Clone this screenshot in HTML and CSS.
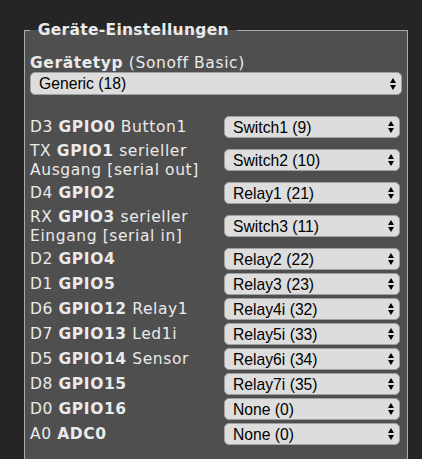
FILE: index.html
```html
<!DOCTYPE html>
<html lang="de">
<head>
  <meta charset="UTF-8" />
  <meta name="viewport" content="width=device-width, initial-scale=1.0" />
  <title>Geräte-Einstellungen</title>
  <link rel="stylesheet" href="styles.css">
</head>
<body>
  <div class="page">
    <fieldset class="settings">
      <legend>&nbsp;Geräte-Einstellungen&nbsp;</legend>

      <!-- Device type -->
      <div class="devtype"><b>Gerätetyp</b> (Sonoff Basic)</div>
      <div class="sel wide">
        <select><option>Generic (18)</option></select>
      </div>

      <!-- GPIO table -->
      <div class="gpio">
        <div class="pin">D3 <b>GPIO0</b> Button1</div>
        <div class="sel"><select><option>Switch1 (9)</option></select></div>

        <div class="pin">TX <b>GPIO1</b> serieller Ausgang [serial out]</div>
        <div class="sel"><select><option>Switch2 (10)</option></select></div>

        <div class="pin">D4 <b>GPIO2</b></div>
        <div class="sel"><select><option>Relay1 (21)</option></select></div>

        <div class="pin">RX <b>GPIO3</b> serieller Eingang [serial in]</div>
        <div class="sel"><select><option>Switch3 (11)</option></select></div>

        <div class="pin">D2 <b>GPIO4</b></div>
        <div class="sel"><select><option>Relay2 (22)</option></select></div>

        <div class="pin">D1 <b>GPIO5</b></div>
        <div class="sel"><select><option>Relay3 (23)</option></select></div>

        <div class="pin">D6 <b>GPIO12</b> Relay1</div>
        <div class="sel"><select><option>Relay4i (32)</option></select></div>

        <div class="pin">D7 <b>GPIO13</b> Led1i</div>
        <div class="sel"><select><option>Relay5i (33)</option></select></div>

        <div class="pin">D5 <b>GPIO14</b> Sensor</div>
        <div class="sel"><select><option>Relay6i (34)</option></select></div>

        <div class="pin">D8 <b>GPIO15</b></div>
        <div class="sel"><select><option>Relay7i (35)</option></select></div>

        <div class="pin">D0 <b>GPIO16</b></div>
        <div class="sel"><select><option>None (0)</option></select></div>

        <div class="pin">A0 <b>ADC0</b></div>
        <div class="sel"><select><option>None (0)</option></select></div>
      </div>
    </fieldset>
  </div>
</body>
</html>
```

FILE: styles.css
```css
* {
  box-sizing: border-box;
}
body {
  margin: 0;
  background: #252525;
  color: #eaeaea;
  font-family: 'DejaVu Sans', Verdana, sans-serif;
  font-size: 15.5px;
  letter-spacing: 0.6px;
  line-height: 18.5px;
  overflow: hidden;
}

.page {
  padding: 21px 14px 0 24px;
}

.settings {
  margin: 0;
  padding: 0 5px 40px;
  border: 1px solid #aaaaaa;
  background: #4f4f4f;
  min-width: 0;
}

.settings legend {
  padding: 0 2px;
  font-weight: bold;
  letter-spacing: 0.3px;
}

.devtype {
  margin-top: 14px;
}

.gpio {
  display: grid;
  grid-template-columns: 1fr 176px;
  column-gap: 2px;
  row-gap: 3px;
  align-items: center;
  padding-right: 2px;
  margin-top: 21px;
}

.pin {
  padding-top: 1px;
}

.sel {
  position: relative;
}

.sel select {
  display: block;
  width: 100%;
  height: 22px;
  margin: 0;
  padding: 0 22px 0 8px;
  appearance: none;
  -webkit-appearance: none;
  background: #dddddd;
  color: #000;
  border: 1px solid #a0a0a0;
  border-radius: 5px;
  font-family: 'Liberation Sans', Arial, sans-serif;
  font-size: 15.7px;
  letter-spacing: normal;
}

.sel.wide select {
  height: 23px;
}

/* up / down arrows */
.sel::before,
.sel::after {
  content: "";
  position: absolute;
  right: 6px;
  border-left: 3.5px solid transparent;
  border-right: 3.5px solid transparent;
  pointer-events: none;
}
.sel::before {
  top: calc(50% - 6px);
  border-bottom: 5px solid #000;
}
.sel::after {
  top: calc(50% + 1px);
  border-top: 5px solid #000;
}
```
